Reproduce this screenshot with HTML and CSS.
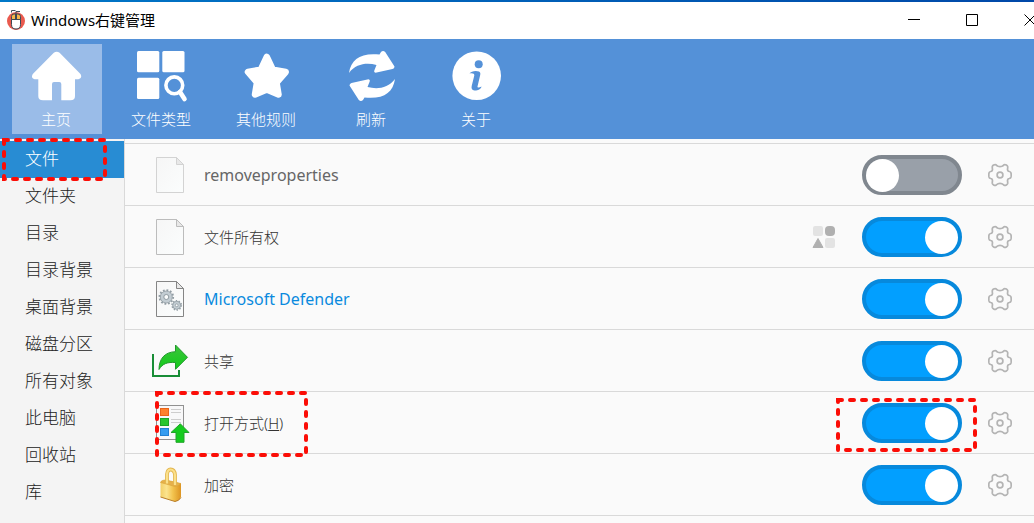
FILE: index.html
```html
<!DOCTYPE html>
<html lang="zh-CN">
<head>
<meta charset="utf-8">
<title>Windows右键管理</title>
<link rel="stylesheet" href="styles.css">
</head>
<body>
<svg class="defs" width="0" height="0" aria-hidden="true">
  <defs>
    <linearGradient id="paper" x1="0" y1="0" x2="1" y2="1"><stop offset="0" stop-color="#f6f6f6"/><stop offset="1" stop-color="#fbfdfd"/></linearGradient>
    <linearGradient id="gold" x1="0" y1="0" x2="1" y2="0"><stop offset="0" stop-color="#f3cf68"/><stop offset=".3" stop-color="#fbe38e"/><stop offset=".6" stop-color="#f3c44f"/><stop offset="1" stop-color="#dc9422"/></linearGradient>
    <linearGradient id="green" x1="0" y1="0" x2="0" y2="1"><stop offset="0" stop-color="#3cc43c"/><stop offset="1" stop-color="#12cb1a"/></linearGradient>
    <symbol id="gear" viewBox="-12 -12 24 24">
      <g fill="none" stroke="#b4b4b4" stroke-width="1.700">
        <path d="M9.300-3.500Q10.700-3.300 11-2Q11.400 0 11 2Q10.700 3.300 9.300 3.500Q7.600 3.600 7.500 5.800Q7.800 7.200 7.700 8.400Q7.400 9.300 6.400 9.900Q5 10.700 4 10.200Q3 9.200 1.900 8.700Q0 8.100-1.900 8.700Q-3 9.200-4 10.200Q-5 10.700-6.400 9.900Q-7.400 9.300-7.700 8.400Q-7.800 7.200-7.500 5.800Q-7.600 3.600-9.300 3.500Q-10.700 3.300-11 2Q-11.400 0-11-2Q-10.700-3.300-9.300-3.500Q-7.600-3.600-7.500-5.800Q-7.800-7.200-7.700-8.400Q-7.400-9.300-6.400-9.900Q-5-10.700-4-10.200Q-3-9.200-1.900-8.700Q0-8.100 1.900-8.700Q3-9.200 4-10.200Q5-10.700 6.400-9.900Q7.400-9.300 7.700-8.400Q7.800-7.200 7.500-5.800Q7.600-3.600 9.300-3.500Z"/>
        <circle r="2.900"/>
      </g>
    </symbol>
    <symbol id="doc" viewBox="0 0 40 40">
      <path d="M6.500 2.500H26.500L33.500 9.500V37.500H6.500Z" fill="url(#paper)" stroke="currentColor"/>
      <path d="M26.500 2.500V9.500H33.500Z" fill="#e8e8e8" stroke="currentColor"/>
    </symbol>
  </defs>
</svg>

<header class="titlebar">
  <svg class="app-icon" viewBox="0 0 20 22" aria-hidden="true">
    <circle cx="10" cy="12" r="9" fill="#ea5a4e"/>
    <path d="M5.500 3.500V1.500H9.500" fill="none" stroke="#44505c"/><path d="M10 5V2.500H14" fill="none" stroke="#44505c"/>
    <path d="M5.500 10.500H14.500V15.500Q14.500 20 10 20T5.500 15.500Z" fill="#fff" stroke="#3d4955"/>
    <path d="M5.500 10.500V7.500Q5.500 5 8 5H12Q14.500 5 14.500 7.500V10.500Z" fill="#f7b64c" stroke="#3d4955"/>
    <rect x="9" y="5" width="2" height="5" fill="#3d4955"/>
  </svg>
  <h1 class="title">Windows右键管理</h1>
  <div class="window-controls">
    <button class="win-button" aria-label="最小化"><svg viewBox="0 0 12 12"><path d="M0 5.500H12" /></svg></button>
    <button class="win-button" aria-label="最大化"><svg viewBox="0 0 12 12"><path d="M.5.5H11.500V11.500H.5Z"/></svg></button>
    <button class="win-button" aria-label="关闭"><svg viewBox="0 0 12 12"><path d="M.5.5L11.500 11.500M11.500.5L.5 11.500"/></svg></button>
  </div>
</header>

<nav class="toolbar" aria-label="工具栏">
  <button class="tool tool-active">
    <svg viewBox="0 0 50 50"><path d="M21.800 1.800Q24.700-.5 27.600 1.800L48 22.500C50.500 25.500 49 28.300 45 28.300H43V45Q43 49.300 38.500 49.300H29.300V33Q29.300 31 27.300 31H22Q20 31 20 33V49.300H11Q6.300 49.300 6.300 45V28.300H4C0 28.300-1.200 25.500 1.300 22.500Z"/></svg>
    <span>主页</span>
  </button>
  <button class="tool">
    <svg viewBox="0 0 50 50"><rect y="0" width="22.300" height="21.300" rx="1.500"/><rect x="25.300" width="22.200" height="21.300" rx="1.500"/><rect y="26.700" width="22.300" height="21.300" rx="1.500"/><circle cx="37.300" cy="34.300" r="8.400" fill="none" stroke="#fff" stroke-width="3.600"/><path d="M43 41L47.500 48" stroke="#fff" stroke-width="4.600" stroke-linecap="round"/></svg>
    <span>文件类型</span>
  </button>
  <button class="tool">
    <svg viewBox="0 0 50 50"><path d="M24.800 6L30.800 18.600L43.700 21L34.500 31.500L36.500 43.500L24.800 38.500L13 43.500L15 31.500L6 21L18.800 18.600Z" stroke="#fff" stroke-width="6.500" stroke-linejoin="round"/></svg>
    <span>其他规则</span>
  </button>
  <button class="tool">
    <svg viewBox="0 0 50 50"><g id="arrow"><path d="M2 22C4 8 14 1.500 32.500 3.500L34 1Q36-1 38.200 1L47.500 15.500Q47.500 17.500 45.500 18L28.500 21.700Q26.500 21.500 27.300 19.500L29.500 14C20 11.500 9 12.500 2 22Z"/></g><use href="#arrow" transform="rotate(180 25 25)"/></svg>
    <span>刷新</span>
  </button>
  <button class="tool">
    <svg viewBox="0 0 50 50"><circle cx="24.700" cy="24.700" r="24.300"/><g fill="#5491d8"><circle cx="26.700" cy="13.300" r="4"/><path d="M17.500 22.500C19 20.300 23.500 19.300 27 20.500C28.500 21.200 28.500 22.500 28.200 24L25.500 35.500C25.300 36.800 27 36.800 29.500 35.600C29 38.500 25 39.800 22.500 39.500C19.800 39 19.200 37.500 19.700 35L22.300 24.500C22.600 22.500 20.500 22 17.500 22.500Z"/></g></svg>
    <span>关于</span>
  </button>
</nav>

<div class="body">
  <nav class="sidebar" aria-label="场景">
    <a class="side-item side-active" href="#" aria-current="page">文件</a>
    <a class="side-item" href="#">文件夹</a>
    <a class="side-item" href="#">目录</a>
    <a class="side-item" href="#">目录背景</a>
    <a class="side-item" href="#">桌面背景</a>
    <a class="side-item" href="#">磁盘分区</a>
    <a class="side-item" href="#">所有对象</a>
    <a class="side-item" href="#">此电脑</a>
    <a class="side-item" href="#">回收站</a>
    <a class="side-item" href="#">库</a>
    <svg class="mark mark-side" width="105" height="43" aria-hidden="true"><rect x="2" y="2" width="101" height="39"/></svg>
  </nav>

  <main class="list">
    <div class="row">
      <svg class="row-icon faded" viewBox="0 0 40 40"><use href="#doc"/></svg>
      <label class="row-label latin" for="t1">removeproperties</label>
      <input class="toggle" type="checkbox" id="t1">
      <button class="gear" aria-label="设置"><svg><use href="#gear"/></svg></button>
    </div>
    <div class="row">
      <svg class="row-icon light" viewBox="0 0 40 40"><use href="#doc"/></svg>
      <label class="row-label" for="t2">文件所有权</label>
      <svg class="group-icon" viewBox="0 0 24 24"><rect x="1" y="1" width="10" height="10" rx="2" fill="#e3e3e3"/><rect x="13" y="1" width="10" height="10" rx="4" fill="#b0b0b0"/><path d="M6 13.500L11 22.500H1Z" fill="#b0b0b0" stroke="#b0b0b0" stroke-linejoin="round"/><rect x="13" y="13" width="10" height="10" rx="2" fill="#e3e3e3"/></svg>
      <input class="toggle" type="checkbox" id="t2" checked>
      <button class="gear" aria-label="设置"><svg><use href="#gear"/></svg></button>
    </div>
    <div class="row">
      <svg class="row-icon dark" viewBox="0 0 40 40"><use href="#doc"/>
        <g fill="#c3cdd3" stroke="#8e999f" stroke-width=".8"><circle cx="16.300" cy="18" r="6"/><circle cx="26.700" cy="26.300" r="4"/></g>
        <g fill="none" stroke="#929da4"><circle cx="16.300" cy="18" r="6.900" stroke-width="1.800" stroke-dasharray="1.800 1.810"/><circle cx="26.700" cy="26.300" r="4.700" stroke-width="1.400" stroke-dasharray="1.400 1.550"/></g>
        <g fill="#fafcfc" stroke="#8e999f"><circle cx="16.300" cy="18" r="2.500"/><circle cx="26.700" cy="26.300" r="1.400" stroke-width=".8"/></g>
      </svg>
      <label class="row-label latin linked" for="t3">Microsoft Defender</label>
      <input class="toggle" type="checkbox" id="t3" checked>
      <button class="gear" aria-label="设置"><svg><use href="#gear"/></svg></button>
    </div>
    <div class="row">
      <svg class="row-icon" viewBox="0 0 40 40"><path d="M3 13V35H29V29" fill="none" stroke="#188d36" stroke-width="2"/><path d="M25.500 4L37.500 16.300L25.500 28.300V21.500C17.500 21 12.500 22.500 9 28.500C9 18 14.500 11 25.500 10.700Z" fill="url(#green)" stroke="#209a2b"/></svg>
      <label class="row-label" for="t4">共享</label>
      <input class="toggle" type="checkbox" id="t4" checked>
      <button class="gear" aria-label="设置"><svg><use href="#gear"/></svg></button>
    </div>
    <div class="row">
      <svg class="row-icon" viewBox="0 0 40 40"><rect x="6.500" y="2.500" width="27" height="34" fill="#f8f8f9" stroke="#919191"/><path d="M21 6.500H31M21 9.500H31M21 16.500H31M21 19.500H31" stroke="#cdcdcd"/><rect x="10.500" y="5.500" width="8" height="7" fill="#ff812d" stroke="#e96419"/><rect x="10.500" y="15.500" width="8" height="7" fill="#28c62e" stroke="#1da326"/><rect x="10.500" y="25.500" width="8" height="7" fill="#359cf0" stroke="#2280d2"/><path d="M30.300 20.800L39 29.500H34V39.300H26V29.500H21Z" fill="#15cb1e" stroke="#22a42a"/></svg>
      <label class="row-label" for="t5">打开方式(<u>H</u>)</label>
      <input class="toggle" type="checkbox" id="t5" checked>
      <button class="gear" aria-label="设置"><svg><use href="#gear"/></svg></button>
    </div>
    <div class="row">
      <svg class="row-icon" viewBox="0 0 40 40">
        <path d="M10.500 17.500Q11 15 16 15L31 18.500V32Q29 36 25 36.500L10.500 32Z" fill="url(#gold)"/>
        <path d="M10.500 17.500Q11 15 16 15L31 18.500Q28 21.500 25 21.500Z" fill="#e6b04a" stroke="#d9a238" stroke-width=".6"/>
        <path d="M10.500 32L25 36.500Q29 36 31 32.500" fill="none" stroke="#b87c28"/>
        <path d="M17 18.500V9.500Q17.500 4.500 20.500 4.500Q24.500 4.500 25 10V20" fill="none" stroke="#e2b44c" stroke-width="3.800"/>
        <path d="M17 18.500V9.500Q17.500 4.500 20.500 4.500Q24.500 4.500 25 10V20" fill="none" stroke="#fbe08a" stroke-width="2.200"/>
      </svg>
      <label class="row-label" for="t6">加密</label>
      <input class="toggle" type="checkbox" id="t6" checked>
      <button class="gear" aria-label="设置"><svg><use href="#gear"/></svg></button>
    </div>
    <svg class="mark mark-row" width="153" height="66" aria-hidden="true"><rect x="2" y="2" width="149" height="62"/></svg>
    <svg class="mark mark-toggle" width="141" height="54" aria-hidden="true"><rect x="2" y="2" width="137" height="50"/></svg>
  </main>
</div>
</body>
</html>
```
FILE: styles.css
```css
* { box-sizing: border-box; }

html, body { height: 100%; }

body {
  margin: 0;
  display: flex;
  flex-direction: column;
  overflow: hidden;
  background: #fafafa;
  color: #333;
  font-family: "Noto Sans", "Noto Sans CJK SC", sans-serif;
  font-size: 15px;
  font-weight: 300;
}

button {
  padding: 0;
  border: 0;
  background: none;
  color: inherit;
  font: inherit;
}

svg { display: block; }

.defs { position: absolute; }

/* Title bar */
.titlebar {
  flex: none;
  display: flex;
  align-items: center;
  height: 39px;
  padding-left: 6px;
  background: linear-gradient(90deg, #0078c8, #0048a8) top / 100% 2px no-repeat #fff;
}

.app-icon { width: 20px; height: 22px; }

.title {
  margin: 0 0 0 5px;
  color: #000;
  font-size: 15px;
  font-weight: 400;
  line-height: 20px;
}

.window-controls {
  display: flex;
  gap: 46px;
  margin: 0 -2px 0 auto;
}

.win-button { width: 12px; height: 12px; }

.win-button svg {
  width: 12px;
  height: 12px;
  fill: none;
  stroke: #000;
}

.window-controls { position: static; gap: 46px; }

/* Toolbar */
.toolbar {
  flex: none;
  display: flex;
  gap: 15px;
  padding: 5px 12px;
  background: #5491d8;
}

.tool {
  display: flex;
  flex-direction: column;
  align-items: center;
  gap: 8px;
  width: 90px;
  height: 90px;
  padding-top: 7px;
  color: #fff;
  line-height: 20px;
}

.tool span { padding-right: 2px; }

.tool svg {
  width: 50px;
  height: 50px;
  fill: #fff;
  overflow: visible;
}

.tool-active { background: #9abce8; }

/* Body */
.body {
  flex: 1;
  display: flex;
  min-height: 0;
}

.sidebar {
  position: relative;
  width: 125px;
  padding-top: 2px;
  border-right: 1px solid #d9d9d9;
  background: #f4f4f4;
}

.side-item {
  display: block;
  padding: 0 0 2px 25px;
  color: #222;
  font-size: 17px;
  line-height: 35px;
  text-decoration: none;
}

.side-active {
  background: #288cd3;
  color: #fff;
}

.list {
  position: relative;
  flex: 1;
  padding-top: 4px;
}

.list::before {
  content: "";
  display: block;
  border-top: 1px solid #d9d9d9;
}

.row {
  display: flex;
  align-items: center;
  padding: 11px 22px 10px 25px;
  border-bottom: 1px solid #d9d9d9;
}

.row-icon {
  width: 40px;
  height: 40px;
}

.faded { color: #d3d3d3; }
.light { color: #bcbcbc; }
.dark { color: #858585; }

.row-label {
  flex: 1;
  margin-left: 14px;
  line-height: 24px;
}

.latin {
  color: #666;
  font-size: 16px;
  font-weight: 400;
}

.linked { color: #0a8ade; }

.group-icon {
  width: 24px;
  height: 24px;
  margin-right: 26px;
}

.toggle {
  appearance: none;
  display: flex;
  align-items: center;
  width: 100px;
  height: 40px;
  margin: 0 26px 0 0;
  padding: 0;
  border: 4px solid #80878f;
  border-radius: 20px;
  background: #99a0a9;
}

.toggle::before {
  content: "";
  width: 33px;
  height: 33px;
  border-radius: 50%;
  background: #fff;
}

.toggle:checked {
  justify-content: flex-end;
  border-color: #0789dc;
  background: #029fff;
}

.gear, .gear svg {
  width: 24px;
  height: 24px;
}

/* Dashed highlight frames laid over the content */
.mark {
  position: absolute;
  fill: none;
  stroke: #fb0d06;
  stroke-width: 4px;
  stroke-linecap: round;
  stroke-dasharray: 4 8;
  pointer-events: none;
}

.mark-side { left: 2px; top: -1px; }
.mark-row { left: 30px; top: 252px; }
.mark-toggle { right: 57px; top: 259px; }
```
